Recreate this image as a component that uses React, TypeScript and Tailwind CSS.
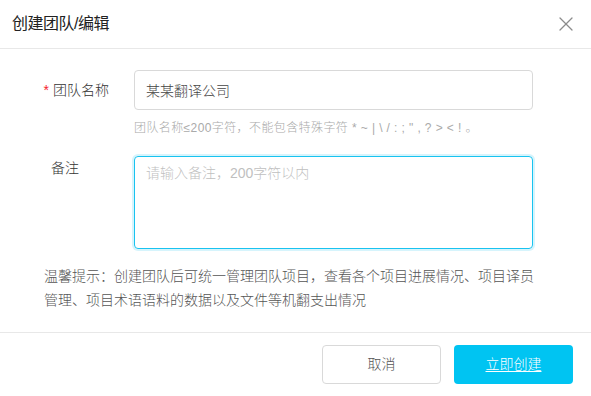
import { X } from 'lucide-react'

const FONT = { fontFamily: '"Liberation Sans", "Noto Sans CJK SC", sans-serif' }

export default function App() {
  return (
    <div className="w-[591px] h-[396px] bg-white flex flex-col text-[#333]" style={FONT}>
      {/* Header */}
      <div className="h-[49px] flex items-center justify-between pl-3 pr-[13px] border-b border-[#e8e8e8]">
        <h2 className="text-[16px] font-normal text-[#222] tracking-[-0.5px]">创建团队/编辑</h2>
        <X className="w-6 h-6 text-[#8c8c8c]" strokeWidth={1.3} />
      </div>

      {/* Body */}
      <div className="flex-1 pt-[21px] border-b border-[#e8e8e8] font-light">
        {/* Team name */}
        <div className="flex">
          <label className="w-[134px] pr-[25px] flex justify-end items-start pt-[10px] text-[14px] leading-[20px] text-[#333]">
            <span className="text-[#f5222d] mr-[4px]">*</span>团队名称
          </label>
          <div className="w-[399px]">
            <input
              defaultValue="某某翻译公司"
              className="w-full h-[40px] px-[11px] border border-[#d9d9d9] rounded-[4px] text-[14px] text-[#444] outline-none font-light"
              style={FONT}
            />
            <p className="mt-[10px] text-[12px] leading-[17px] text-[#aaa] tracking-[0.4px]">
              团队名称≤200字符，不能包含特殊字符 * ~ | \ / : ; " , ? &gt; &lt; ! 。
            </p>
          </div>
        </div>

        {/* Remark */}
        <div className="flex mt-[19px]">
          <label className="w-[134px] pl-[51px] pt-[2px] text-[14px] leading-[20px] text-[#333]">备注</label>
          <textarea
            autoFocus
            placeholder="请输入备注，200字符以内"
            className="w-[399px] h-[93px] px-[11px] py-[6px] border border-[#19c3f0] rounded-[4px] text-[14px] leading-[20px] outline-none resize-none shadow-[0_0_0_2px_rgba(25,195,240,0.18)] placeholder:text-[#bfbfbf] font-light"
            style={FONT}
          />
        </div>

        {/* Tip */}
        <p className="mt-[15px] pl-[44px] pr-[52px] text-[14px] leading-[24px] text-[#555]">
          温馨提示：创建团队后可统一管理团队项目，查看各个项目进展情况、项目译员管理、项目术语语料的数据以及文件等机翻支出情况
        </p>
      </div>

      {/* Footer */}
      <div className="h-[63px] flex justify-end items-start pt-[12px] pr-[18px] gap-[13px] font-light">
        <button className="w-[119px] h-[39px] border border-[#d9d9d9] rounded-[4px] text-[14px] text-[#555] bg-white">取消</button>
        <button className="w-[119px] h-[39px] rounded-[4px] text-[14px] text-white bg-[#00c4f2] underline underline-offset-2">立即创建</button>
      </div>
    </div>
  )
}
